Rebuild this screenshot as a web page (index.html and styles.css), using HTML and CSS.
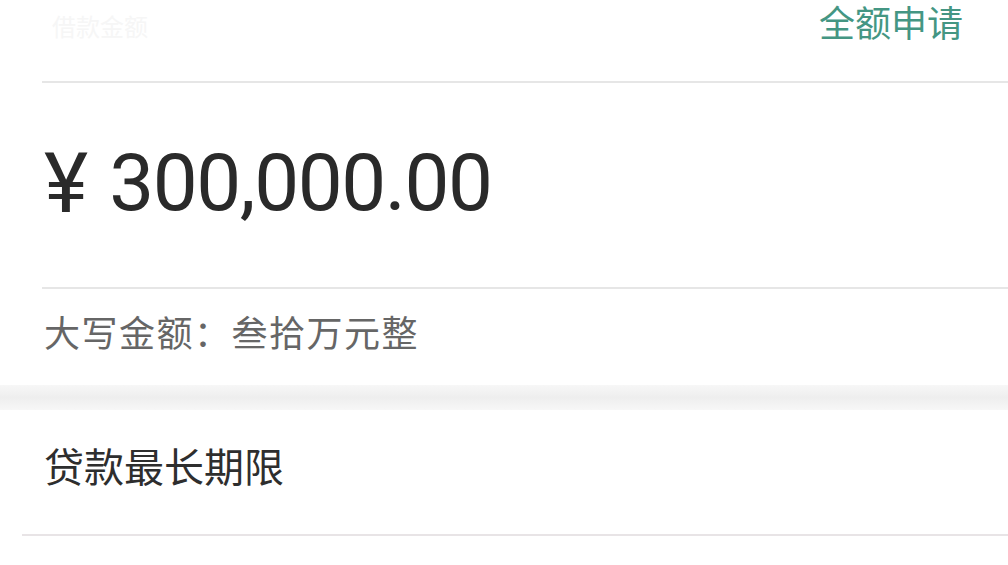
FILE: index.html
```html
<!DOCTYPE html>
<html lang="zh-CN">
<head>
<meta charset="utf-8">
<link rel="stylesheet" href="styles.css">
</head>
<body>
<div class="page">
  <section class="card">
    <div class="row-head">
      <span class="faint">借款金额</span>
      <span class="apply">全额申请</span>
    </div>
    <div class="amount"><span class="yen">¥</span><span class="num">300,000.00</span></div>
    <div class="caps">大写金额：叁拾万元整</div>
  </section>
  <div class="band"></div>
  <section class="card2">
    <div class="term">贷款最长期限</div>
  </section>
</div>
</body>
</html>
```
FILE: styles.css
```css
html, body {
  margin: 0;
  padding: 0;
  background: #ffffff;
}
body {
  font-family: Roboto, "Noto Sans CJK SC", sans-serif;
  width: 1008px;
  height: 565px;
  overflow: hidden;
}
.page {
  display: flex;
  flex-direction: column;
}
.card {
  padding-left: 42px;
}
.row-head {
  height: 83px;
  border-bottom: 2px solid #e6e6e6;
  display: flex;
  justify-content: space-between;
  align-items: flex-start;
  box-sizing: border-box;
}
.faint {
  font-family: "Noto Sans CJK SC", sans-serif;
  color: #f6f6f6;
  font-size: 24px;
  margin-top: 8px;
  margin-left: 10px;
}
.apply {
  font-family: "Noto Sans CJK SC", sans-serif;
  color: #449683;
  font-size: 36px;
  line-height: 42px;
  margin-right: 45px;
}
.amount {
  height: 206px;
  border-bottom: 2px solid #e6e6e6;
  box-sizing: border-box;
  display: flex;
  align-items: center;
  color: #2a2a2a;
  padding-bottom: 4px;
}
.yen {
  font-size: 84px;
  margin-left: 2px;
  margin-right: 21px;
}
.num {
  font-size: 80px;
  letter-spacing: -1.4px;
}
.caps {
  height: 96px;
  font-family: "Noto Sans CJK SC", sans-serif;
  font-size: 36px;
  letter-spacing: 1.5px;
  color: #666666;
  padding-top: 20px;
  padding-left: 2px;
  box-sizing: border-box;
  line-height: 44px;
}
.band {
  height: 25px;
  background: linear-gradient(#f7f7f7, #eeeeee 50%, #f7f7f7);
}
.card2 {
  padding-left: 22px;
}
.term {
  height: 126px;
  border-bottom: 2px solid #e8e4e6;
  box-sizing: border-box;
  font-family: "Noto Sans CJK SC", sans-serif;
  font-size: 40px;
  color: #2e2e2e;
  padding-left: 22px;
  padding-top: 31px;
  line-height: 48px;
}
```
